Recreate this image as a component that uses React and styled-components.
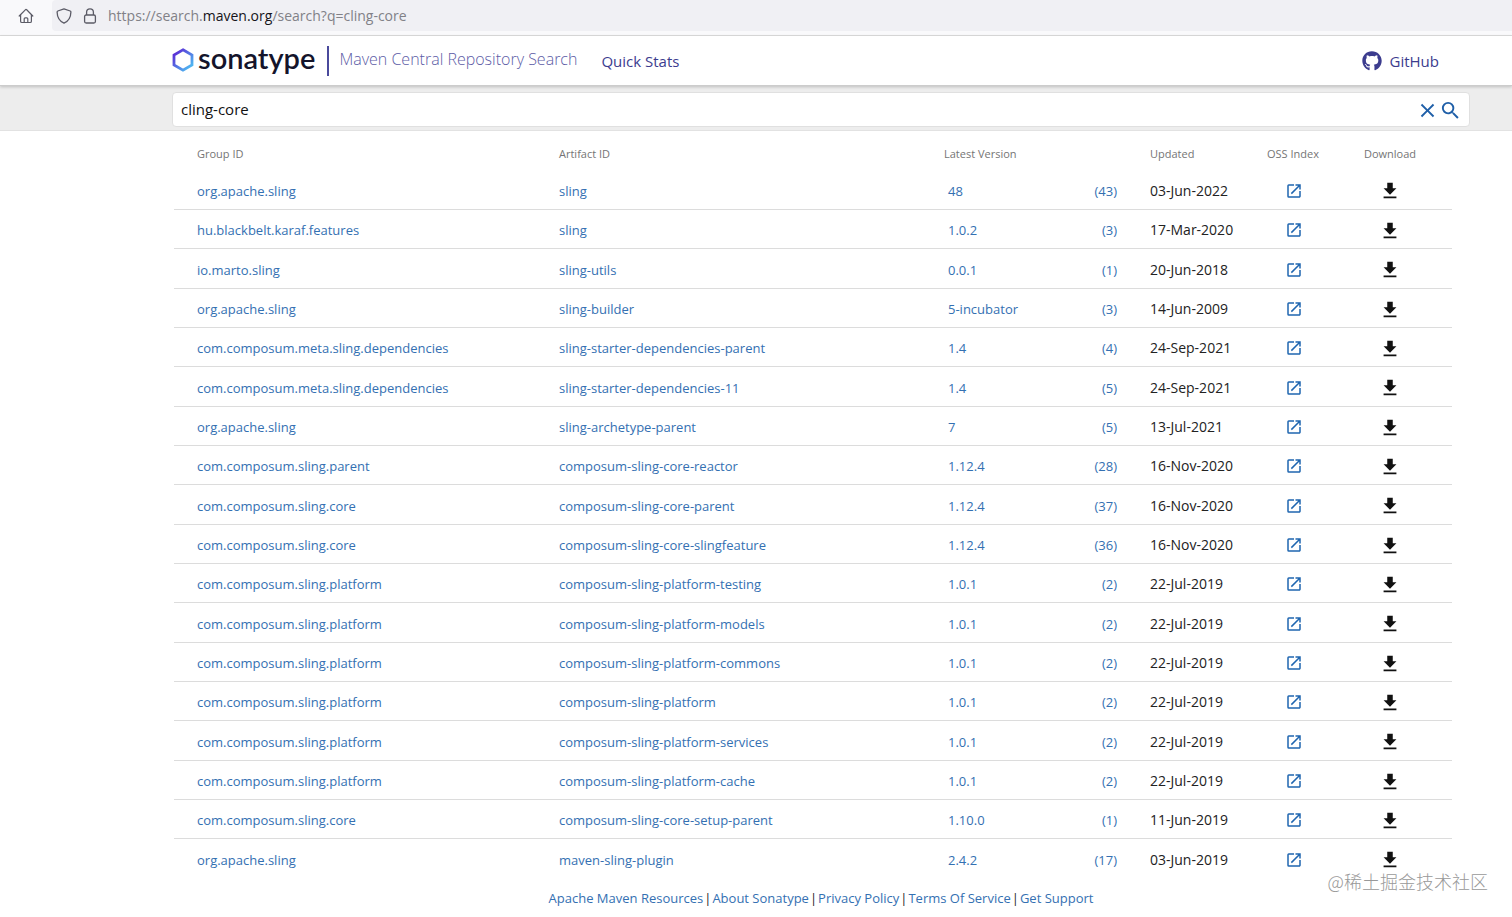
import React, {useState} from "react";
import styled, {createGlobalStyle} from "styled-components";
import {MdClose, MdOpenInNew, MdSearch} from "react-icons/md";
import {FaGithub} from "react-icons/fa";

const GlobalStyle = createGlobalStyle`
    * {
        box-sizing: border-box;
    }

    body {
        margin: 0;
        background: #fff;
        color: #222;
        font-family: "Open Sans", "Noto Sans CJK SC", sans-serif;
        font-size: 13px;
    }

    a {
        color: #3470b2;
        text-decoration: none;
    }
`

const Page = styled.div`
    position: relative;
    min-height: 100vh;
`

const BrowserBar = styled.div`
    display: flex;
    align-items: center;
    height: 36px;
    padding-bottom: 4px;
    background: #f9f9fb;
    border-bottom: 1px solid #dcdcdc;
`

const HomeButton = styled.button`
    display: flex;
    justify-content: center;
    align-items: center;
    width: 52px;
    height: 31px;
    padding: 0;
    border: 0;
    background: none;
`

const AddressBar = styled.div`
    display: flex;
    align-items: center;
    flex: 1;
    gap: 10px;
    height: 31px;
    padding-left: 4px;
    background: #f0f0f4;
    border-radius: 4px 0 0 4px;
`

const Url = styled.div`
    color: #818187;
    font-size: 14px;
    line-height: 20px;

    span {
        color: #15141a;
    }
`

const Header = styled.header`
    position: relative;
    display: flex;
    align-items: center;
    height: 50px;
    padding: 0 73px 0 172px;
    background: #fff;
    border-bottom: 1px solid #ccc;
    box-shadow: 0 1px 3px rgba(0, 0, 0, 0.2);
`

const Brand = styled.a`
    display: flex;
    align-items: flex-start;
    height: 30px;
    color: #14142b;

    svg {
        margin-top: 2px;
    }
`

const Wordmark = styled.span`
    margin: 0 12px 0 4px;
    font-family: Lato, sans-serif;
    font-size: 29px;
    font-weight: 600;
    line-height: 24px;
`

const Tagline = styled.span`
    padding: 0 0 4px 10px;
    border-left: 2px solid #4a4a9c;
    color: #5c5ca6;
    font-size: 16px;
    font-weight: 300;
    line-height: 26px;
`

const NavLink = styled.a`
    display: flex;
    align-items: center;
    gap: 8px;
    margin-left: ${({$end}) => $end ? "auto" : "24px"};
    color: #3c3c8e;
    font-size: 15px;
`

const SearchStrip = styled.form`
    height: 45px;
    padding: 6px 42px 0 172px;
    background: #ededed;
    border-bottom: 1px solid #e2e2e2;
`

const SearchBox = styled.div`
    display: flex;
    align-items: center;
    height: 35px;
    padding: 0 7px 0 8px;
    background: #fff;
    border: 1px solid #e0e0e0;
    border-radius: 4px;
`

const SearchInput = styled.input`
    flex: 1;
    min-width: 0;
    padding: 0 0 1px;
    border: 0;
    outline: none;
    background: none;
    color: #111;
    font-family: "Open Sans", sans-serif;
    font-size: 15px;
`

const IconButton = styled.button`
    display: flex;
    padding: 1px 0 0;
    border: 0;
    background: none;
    color: #1f5fa8;
`

const Results = styled.main`
    padding: 0 60px 0 174px;
`

const Table = styled.table`
    width: 100%;
    border-collapse: collapse;
    table-layout: fixed;
`

const HeadCell = styled.th`
    height: 39px;
    padding: ${({$pad}) => $pad || "6px 0 0 23px"};
    color: #757575;
    font-size: 11px;
    font-weight: 400;
    text-align: ${({$align}) => $align || "left"};
`

const Row = styled.tr`
    height: 39px;

    &:nth-child(3n) {
        height: 40px;
    }

    &:not(:last-child) {
        border-bottom: 1px solid #dcdcdc;
    }
`

const Cell = styled.td`
    padding: ${({$pad}) => $pad || "3px 0 0 23px"};
    font-size: ${({$size}) => $size || "13px"};
    line-height: 20px;
    text-align: ${({$align}) => $align || "left"};
    white-space: nowrap;
`

const IconLink = styled.a`
    display: flex;
    justify-content: center;
    color: ${({$dark}) => $dark ? "#111" : "#1f66b0"};
`

const Footer = styled.footer`
    display: flex;
    justify-content: center;
    gap: 1px;
    padding: 10px 0 4px 130px;
    color: #222;
    line-height: 20px;
`

const Watermark = styled.div`
    position: absolute;
    right: 24px;
    bottom: 23px;
    color: #999;
    font-family: "Noto Sans CJK SC", sans-serif;
    font-size: 18px;
    font-weight: 300;
    line-height: 26px;
`

const columns = [362, 385, 120, 86, 118, 96, 111];

const rows = [
    ["org.apache.sling", "sling", "48", 43, "03-Jun-2022"],
    ["hu.blackbelt.karaf.features", "sling", "1.0.2", 3, "17-Mar-2020"],
    ["io.marto.sling", "sling-utils", "0.0.1", 1, "20-Jun-2018"],
    ["org.apache.sling", "sling-builder", "5-incubator", 3, "14-Jun-2009"],
    ["com.composum.meta.sling.dependencies", "sling-starter-dependencies-parent", "1.4", 4, "24-Sep-2021"],
    ["com.composum.meta.sling.dependencies", "sling-starter-dependencies-11", "1.4", 5, "24-Sep-2021"],
    ["org.apache.sling", "sling-archetype-parent", "7", 5, "13-Jul-2021"],
    ["com.composum.sling.parent", "composum-sling-core-reactor", "1.12.4", 28, "16-Nov-2020"],
    ["com.composum.sling.core", "composum-sling-core-parent", "1.12.4", 37, "16-Nov-2020"],
    ["com.composum.sling.core", "composum-sling-core-slingfeature", "1.12.4", 36, "16-Nov-2020"],
    ["com.composum.sling.platform", "composum-sling-platform-testing", "1.0.1", 2, "22-Jul-2019"],
    ["com.composum.sling.platform", "composum-sling-platform-models", "1.0.1", 2, "22-Jul-2019"],
    ["com.composum.sling.platform", "composum-sling-platform-commons", "1.0.1", 2, "22-Jul-2019"],
    ["com.composum.sling.platform", "composum-sling-platform", "1.0.1", 2, "22-Jul-2019"],
    ["com.composum.sling.platform", "composum-sling-platform-services", "1.0.1", 2, "22-Jul-2019"],
    ["com.composum.sling.platform", "composum-sling-platform-cache", "1.0.1", 2, "22-Jul-2019"],
    ["com.composum.sling.core", "composum-sling-core-setup-parent", "1.10.0", 1, "11-Jun-2019"],
    ["org.apache.sling", "maven-sling-plugin", "2.4.2", 17, "03-Jun-2019"],
];

const footerLinks = [
    "Apache Maven Resources",
    "About Sonatype",
    "Privacy Policy",
    "Terms Of Service",
    "Get Support",
];

const HomeIcon = () => (
    <svg width="16" height="16" viewBox="0 0 16 16" fill="none" stroke="#5b5b66" strokeWidth="1.2" strokeLinejoin="round" strokeLinecap="round">
        <path d="M1.2 8 7.3 1.8a1 1 0 0 1 1.4 0L14.8 8" />
        <path d="M2.6 6.8v6.4a1.3 1.3 0 0 0 1.3 1.3h8.2a1.3 1.3 0 0 0 1.3-1.3V6.8" />
        <path d="M6.2 14.4v-3.6a1 1 0 0 1 1-1h1.6a1 1 0 0 1 1 1v3.6" />
    </svg>
)

const ShieldIcon = () => (
    <svg width="16" height="16" viewBox="0 0 16 16" fill="none" stroke="#5b5b66" strokeWidth="1.3" strokeLinejoin="round">
        <path d="M8 .9 14.2 3c.5.2.7.5.7 1-.1 5.2-2 9-6.9 11.2C3.2 13 1.2 9.2 1.1 4c0-.5.2-.8.7-1z" />
    </svg>
)

const LockIcon = () => (
    <svg width="16" height="16" viewBox="0 0 16 16" fill="none" stroke="#5b5b66" strokeWidth="1.3">
        <rect x="2.6" y="7" width="10.8" height="8" rx="1.5" />
        <path d="M4.6 7V4.2a3.4 3.4 0 0 1 6.8 0V7" />
    </svg>
)

const HexagonIcon = () => (
    <svg width="22" height="24" viewBox="0 0 22 24" fill="none">
        <defs>
            <linearGradient id="hexagon" x1="3" y1="5" x2="18" y2="19" gradientUnits="userSpaceOnUse">
                <stop stopColor="#5a2fd6" />
                <stop offset="1" stopColor="#4fb4f0" />
            </linearGradient>
        </defs>
        <path d="M11 1.8 20 7v10l-9 5.2L2 17V7z" stroke="url(#hexagon)" strokeWidth="2.8" />
    </svg>
)

const DownloadIcon = () => (
    <svg width="22" height="22" viewBox="0 0 24 24" fill="currentColor">
        <path d="M19 9h-4V3H9v6H5l7 7 7-7zM5 18v2h14v-2H5z" />
    </svg>
)

const App = () => {
    const [query, setQuery] = useState("cling-core");

    return (
        <Page>
            <GlobalStyle />
            <BrowserBar>
                <HomeButton aria-label="Home"><HomeIcon /></HomeButton>
                <AddressBar>
                    <ShieldIcon />
                    <LockIcon />
                    <Url>https://search.<span>maven.org</span>/search?q=cling-core</Url>
                </AddressBar>
            </BrowserBar>
            <Header>
                <Brand href="#">
                    <HexagonIcon />
                    <Wordmark>sonatype</Wordmark>
                    <Tagline>Maven Central Repository Search</Tagline>
                </Brand>
                <NavLink href="#stats">Quick Stats</NavLink>
                <NavLink href="#github" $end><FaGithub size={20} />GitHub</NavLink>
            </Header>
            <SearchStrip onSubmit={(event) => event.preventDefault()}>
                <SearchBox>
                    <SearchInput
                        aria-label="Search"
                        value={query}
                        onChange={(event) => setQuery(event.target.value)}
                    />
                    <IconButton type="button" aria-label="Clear" onClick={() => setQuery("")}>
                        <MdClose size={23} />
                    </IconButton>
                    <IconButton type="submit" aria-label="Search">
                        <MdSearch size={23} />
                    </IconButton>
                </SearchBox>
            </SearchStrip>
            <Results>
                <Table>
                    <colgroup>
                        {columns.map((width, index) => <col key={index} width={width} />)}
                    </colgroup>
                    <thead>
                        <tr>
                            <HeadCell>Group ID</HeadCell>
                            <HeadCell>Artifact ID</HeadCell>
                            <HeadCell colSpan={2}>Latest Version</HeadCell>
                            <HeadCell>Updated</HeadCell>
                            <HeadCell $pad="6px 0 0" $align="center">OSS Index</HeadCell>
                            <HeadCell $pad="6px 13px 0 0" $align="center">Download</HeadCell>
                        </tr>
                    </thead>
                    <tbody>
                        {rows.map(([group, artifact, version, count, updated], index) => (
                            <Row key={index}>
                                <Cell><a href="#group">{group}</a></Cell>
                                <Cell><a href="#artifact">{artifact}</a></Cell>
                                <Cell $pad="3px 0 0 27px"><a href="#version">{version}</a></Cell>
                                <Cell $pad="3px 10px 0 0" $align="right"><a href="#versions">({count})</a></Cell>
                                <Cell $size="14px">{updated}</Cell>
                                <Cell $pad="3px 0 0 1px">
                                    <IconLink href="#oss" aria-label="OSS Index"><MdOpenInNew size={18} /></IconLink>
                                </Cell>
                                <Cell $pad="4px 13px 0 0">
                                    <IconLink href="#download" aria-label="Download" $dark><DownloadIcon /></IconLink>
                                </Cell>
                            </Row>
                        ))}
                    </tbody>
                </Table>
            </Results>
            <Footer>
                {footerLinks.map((label, index) => (
                    <React.Fragment key={label}>
                        {index > 0 && <span>|</span>}
                        <a href="#footer">{label}</a>
                    </React.Fragment>
                ))}
            </Footer>
            <Watermark>@稀土掘金技术社区</Watermark>
        </Page>
    )
}

export default App;
